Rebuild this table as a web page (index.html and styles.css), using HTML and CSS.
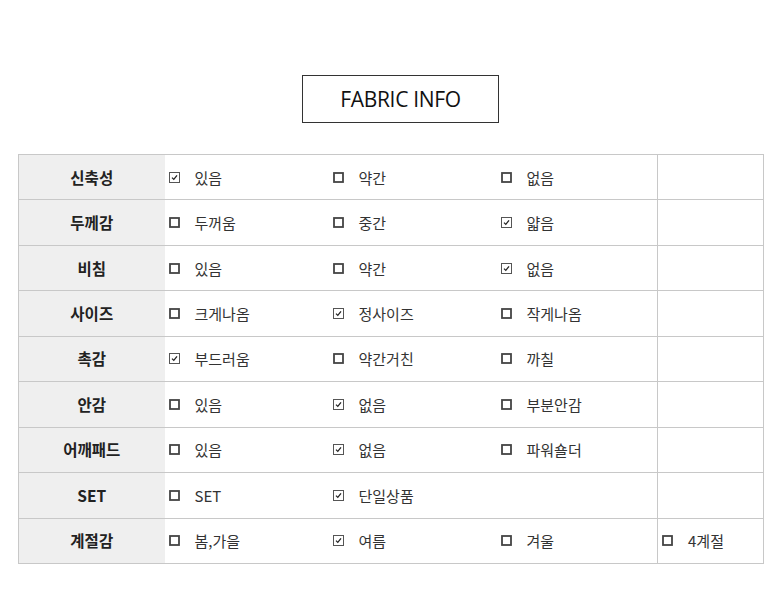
FILE: index.html
```html
<!DOCTYPE html>
<html lang="ko">
<head>
<meta charset="utf-8">
<link rel="stylesheet" href="styles.css">
</head>
<body>
<div class="page">
  <div class="title">FABRIC INFO</div>
  <table class="info">
    <colgroup>
      <col class="c1"><col class="c2"><col class="c3"><col class="c4"><col class="c5">
    </colgroup>
    <tr><th>신축성</th>
      <td><span class="opt"><svg class="cb" viewBox="0 0 11 11"><rect x="0.5" y="0.5" width="10" height="10" class="bx-on"/><path d="M3 5.6 L4.8 7.4 L8 3.4" class="ck"/></svg>있음</span></td>
      <td><span class="opt"><svg class="cb" viewBox="0 0 11 11"><rect x="1" y="1" width="9" height="9" class="bx"/></svg>약간</span></td>
      <td><span class="opt"><svg class="cb" viewBox="0 0 11 11"><rect x="1" y="1" width="9" height="9" class="bx"/></svg>없음</span></td>
      <td class="last"></td></tr>
    <tr><th>두께감</th>
      <td><span class="opt"><svg class="cb" viewBox="0 0 11 11"><rect x="1" y="1" width="9" height="9" class="bx"/></svg>두꺼움</span></td>
      <td><span class="opt"><svg class="cb" viewBox="0 0 11 11"><rect x="1" y="1" width="9" height="9" class="bx"/></svg>중간</span></td>
      <td><span class="opt"><svg class="cb" viewBox="0 0 11 11"><rect x="0.5" y="0.5" width="10" height="10" class="bx-on"/><path d="M3 5.6 L4.8 7.4 L8 3.4" class="ck"/></svg>얇음</span></td>
      <td class="last"></td></tr>
    <tr><th>비침</th>
      <td><span class="opt"><svg class="cb" viewBox="0 0 11 11"><rect x="1" y="1" width="9" height="9" class="bx"/></svg>있음</span></td>
      <td><span class="opt"><svg class="cb" viewBox="0 0 11 11"><rect x="1" y="1" width="9" height="9" class="bx"/></svg>약간</span></td>
      <td><span class="opt"><svg class="cb" viewBox="0 0 11 11"><rect x="0.5" y="0.5" width="10" height="10" class="bx-on"/><path d="M3 5.6 L4.8 7.4 L8 3.4" class="ck"/></svg>없음</span></td>
      <td class="last"></td></tr>
    <tr><th>사이즈</th>
      <td><span class="opt"><svg class="cb" viewBox="0 0 11 11"><rect x="1" y="1" width="9" height="9" class="bx"/></svg>크게나옴</span></td>
      <td><span class="opt"><svg class="cb" viewBox="0 0 11 11"><rect x="0.5" y="0.5" width="10" height="10" class="bx-on"/><path d="M3 5.6 L4.8 7.4 L8 3.4" class="ck"/></svg>정사이즈</span></td>
      <td><span class="opt"><svg class="cb" viewBox="0 0 11 11"><rect x="1" y="1" width="9" height="9" class="bx"/></svg>작게나옴</span></td>
      <td class="last"></td></tr>
    <tr><th>촉감</th>
      <td><span class="opt"><svg class="cb" viewBox="0 0 11 11"><rect x="0.5" y="0.5" width="10" height="10" class="bx-on"/><path d="M3 5.6 L4.8 7.4 L8 3.4" class="ck"/></svg>부드러움</span></td>
      <td><span class="opt"><svg class="cb" viewBox="0 0 11 11"><rect x="1" y="1" width="9" height="9" class="bx"/></svg>약간거친</span></td>
      <td><span class="opt"><svg class="cb" viewBox="0 0 11 11"><rect x="1" y="1" width="9" height="9" class="bx"/></svg>까칠</span></td>
      <td class="last"></td></tr>
    <tr><th>안감</th>
      <td><span class="opt"><svg class="cb" viewBox="0 0 11 11"><rect x="1" y="1" width="9" height="9" class="bx"/></svg>있음</span></td>
      <td><span class="opt"><svg class="cb" viewBox="0 0 11 11"><rect x="0.5" y="0.5" width="10" height="10" class="bx-on"/><path d="M3 5.6 L4.8 7.4 L8 3.4" class="ck"/></svg>없음</span></td>
      <td><span class="opt"><svg class="cb" viewBox="0 0 11 11"><rect x="1" y="1" width="9" height="9" class="bx"/></svg>부분안감</span></td>
      <td class="last"></td></tr>
    <tr><th>어깨패드</th>
      <td><span class="opt"><svg class="cb" viewBox="0 0 11 11"><rect x="1" y="1" width="9" height="9" class="bx"/></svg>있음</span></td>
      <td><span class="opt"><svg class="cb" viewBox="0 0 11 11"><rect x="0.5" y="0.5" width="10" height="10" class="bx-on"/><path d="M3 5.6 L4.8 7.4 L8 3.4" class="ck"/></svg>없음</span></td>
      <td><span class="opt"><svg class="cb" viewBox="0 0 11 11"><rect x="1" y="1" width="9" height="9" class="bx"/></svg>파워숄더</span></td>
      <td class="last"></td></tr>
    <tr><th>SET</th>
      <td><span class="opt"><svg class="cb" viewBox="0 0 11 11"><rect x="1" y="1" width="9" height="9" class="bx"/></svg>SET</span></td>
      <td><span class="opt"><svg class="cb" viewBox="0 0 11 11"><rect x="0.5" y="0.5" width="10" height="10" class="bx-on"/><path d="M3 5.6 L4.8 7.4 L8 3.4" class="ck"/></svg>단일상품</span></td>
      <td></td>
      <td class="last"></td></tr>
    <tr><th>계절감</th>
      <td><span class="opt"><svg class="cb" viewBox="0 0 11 11"><rect x="1" y="1" width="9" height="9" class="bx"/></svg>봄,가을</span></td>
      <td><span class="opt"><svg class="cb" viewBox="0 0 11 11"><rect x="0.5" y="0.5" width="10" height="10" class="bx-on"/><path d="M3 5.6 L4.8 7.4 L8 3.4" class="ck"/></svg>여름</span></td>
      <td><span class="opt"><svg class="cb" viewBox="0 0 11 11"><rect x="1" y="1" width="9" height="9" class="bx"/></svg>겨울</span></td>
      <td class="last"><span class="opt"><svg class="cb" viewBox="0 0 11 11"><rect x="1" y="1" width="9" height="9" class="bx"/></svg>4계절</span></td></tr>
  </table>
</div>
</body>
</html>
```

FILE: styles.css
```css
html, body {
  margin: 0;
  padding: 0;
  background: #fff;
}
body {
  font-family: "Noto Sans CJK KR", "Noto Sans", sans-serif;
  color: #222;
}
.page {
  padding: 75px 0 0 18px;
  width: 745px;
}
.title {
  margin-left: 284px;
  width: 195px;
  height: 46px;
  border: 1px solid #333;
  display: flex;
  align-items: center;
  justify-content: center;
  font-family: "Open Sans", "Noto Sans", sans-serif;
  font-size: 21px;
  color: #111;
  letter-spacing: -0.3px;
}
.info {
  margin-top: 31px;
  width: 745px;
  border-collapse: collapse;
  table-layout: fixed;
  font-size: 15px;
}
.c1 { width: 146px; }
.c2 { width: 164px; }
.c3 { width: 168px; }
.c4 { width: 161px; }
.c5 { width: 106px; }
.info tr {
  height: 45.45px;
}
.info th, .info td {
  border-top: 1px solid #c8c8c8;
  border-bottom: 1px solid #c8c8c8;
  padding: 0 0 1px 4px;
  vertical-align: middle;
  text-align: left;
}
.info th {
  background: #efefef;
  border-left: 1px solid #c8c8c8;
  font-weight: 700;
  font-size: 15.5px;
  text-align: center;
  padding: 0 0 1px 0;
  color: #222;
}
.info td.last {
  border-left: 1px solid #c8c8c8;
  border-right: 1px solid #c8c8c8;
}
.opt {
  display: inline-flex;
  align-items: center;
  color: #333;
}
.cb {
  width: 11px;
  height: 11px;
  margin-right: 15px;
  flex: none;
}
.bx {
  fill: none;
  stroke: #444;
  stroke-width: 1.8;
}
.bx-on {
  fill: none;
  stroke: #555;
  stroke-width: 1;
}
.ck {
  fill: none;
  stroke: #222;
  stroke-width: 1.3;
}
```
